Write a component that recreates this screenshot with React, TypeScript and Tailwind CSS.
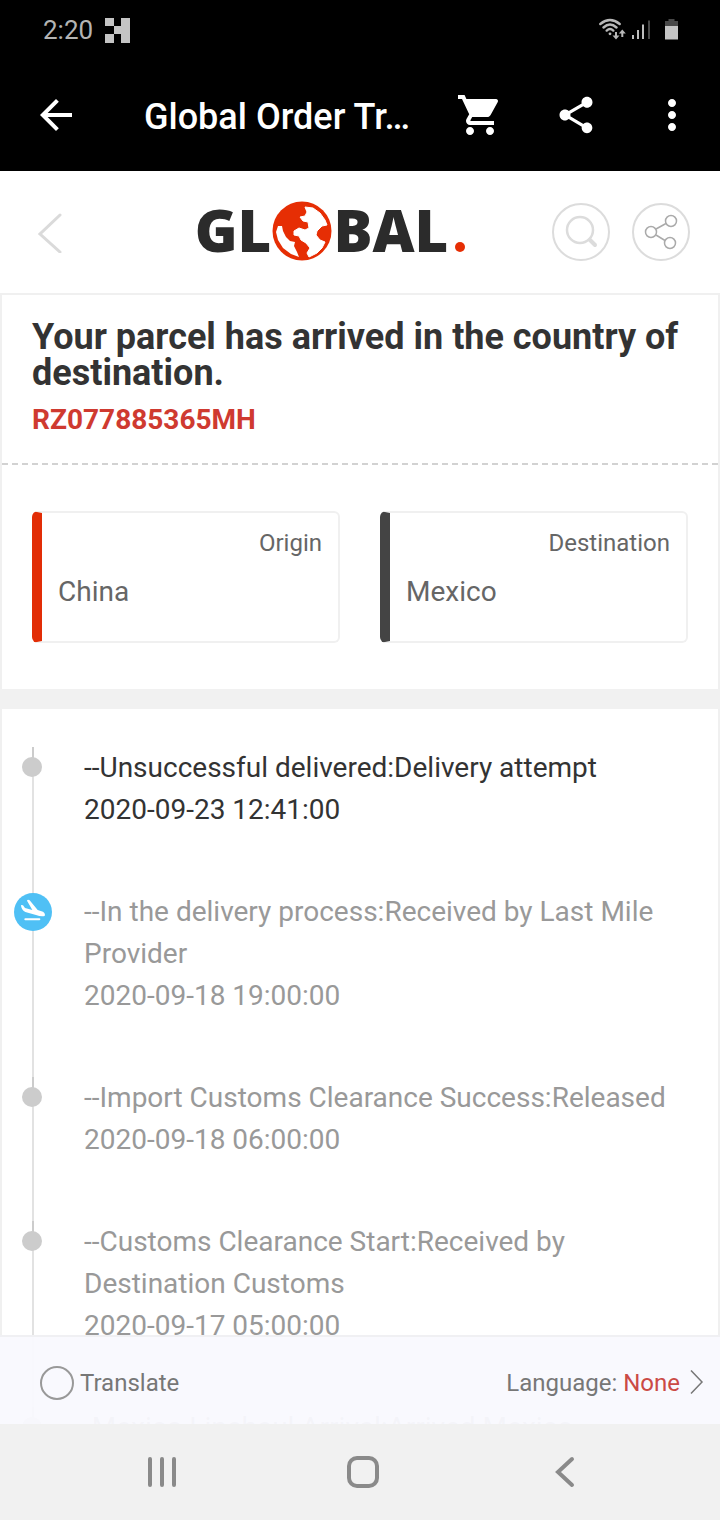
import React from 'react';
import { MdArrowBack, MdMoreVert, MdShare, MdShoppingCart } from 'react-icons/md';

interface TrackingEvent {
  text: string;
  time?: string;
  icon?: 'landing';
  latest?: boolean;
}

interface PlaceCardProps {
  label: string;
  country: string;
  accent: string;
}

const events: TrackingEvent[] = [
  { text: '--Unsuccessful delivered:Delivery attempt', time: '2020-09-23 12:41:00', latest: true },
  { text: '--In the delivery process:Received by Last Mile Provider', time: '2020-09-18 19:00:00', icon: 'landing' },
  { text: '--Import Customs Clearance Success:Released', time: '2020-09-18 06:00:00' },
  { text: '--Customs Clearance Start:Received by Destination Customs', time: '2020-09-17 05:00:00' },
  { text: '-Mexico Linehaul Arrival:Arrived Mexico' },
];

const StatusBar = () => (
  <div className="flex h-15 shrink-0 items-center justify-between pl-[43px] pr-10 text-[#b4b4b4]">
    <div className="flex items-center gap-3">
      <span className="text-[26px] leading-8">2:20</span>
      <svg viewBox="0 0 25 25" className="size-[25px]" fill="#c4c4c4" shapeRendering="crispEdges">
        <path d="M0 0h9v8H0zM9 8h7v8H9zM0 16h9v9H0zM16 0h9v25h-9z" />
      </svg>
    </div>
    <svg viewBox="0 0 82 24" className="h-6 w-[82px]" fill="none">
      {/* wifi with traffic arrows */}
      <g stroke="#b8b8b8" strokeWidth="2.400" strokeLinecap="round">
        <path d="M2.300 6Q12 -1.800 21.700 6M5.500 9.500Q12 3.500 18.500 9.500M8.700 12.600Q12 9.500 15.300 12.600" />
      </g>
      <circle cx="12" cy="15.800" r="1.400" fill="#b8b8b8" />
      <path d="M17 14h2v3.500h2.500L18 21.500l-3.500-4h2.500zM23.300 19h2v-3.500h2.500L24.300 11.500l-3.500 4h2.500z" fill="#b8b8b8" />
      {/* signal */}
      <g strokeWidth="2">
        <path d="M35 17v4M40 12v9M45 6.500V21" stroke="#bdbdbd" />
        <path d="M51 2.500V21" stroke="#484848" />
      </g>
      {/* battery */}
      <path d="M70.500 1h6v2H80v5H67V3h3.500z" fill="#484848" />
      <path d="M67 8h13v13.500h-13z" fill="#c4c4c4" />
    </svg>
  </div>
);

const AppBar = () => (
  <header className="flex h-[110px] shrink-0 items-center pl-8 pr-6 text-white">
    <button aria-label="Back" className="mr-16">
      <MdArrowBack className="size-12" />
    </button>
    <h1 className="min-w-0 flex-1 truncate pt-1 text-[36px] leading-12 font-medium">Global Order Tr…</h1>
    <div className="flex items-center gap-[50px]">
      <button aria-label="Cart">
        <MdShoppingCart className="size-12" />
      </button>
      <button aria-label="Share">
        <MdShare className="size-11" />
      </button>
      <button aria-label="More">
        <MdMoreVert className="size-12" />
      </button>
    </div>
  </header>
);

const Globe = () => (
  <svg viewBox="0 0 60 60" className="size-15">
    <circle cx="30" cy="30" r="29.500" fill="#e62e04" />
    <path
      d="M33 6L41 7L48 12L53 19L55 24L50 25L45 30L44 34L48 39L53 41L50 47L45 52L37 56L35 52L38 47L34 42L29 39L27 35L22 34L22 30L27 27L33 29L37 27L36 21L31 20L28 16L33 15L35 11Z"
      fill="#fff"
      stroke="#fff"
      strokeLinejoin="round"
    />
    <path
      d="M6 25L10 25L11 30L14 36L18 40L23 41L22 45L25 51L27 56L19 53L11 47L6 39L4 31Z"
      fill="#fff"
    />
  </svg>
);

const SiteHeader = () => (
  <div className="flex h-[122px] shrink-0 items-center justify-between bg-white pl-9 pr-[30px]">
    <button aria-label="Previous page">
      <svg viewBox="0 0 28 42" className="h-[42px] w-7" fill="none" stroke="#dadada" strokeWidth="3" strokeLinecap="round">
        <path d="M24 4L4 23L24 41" />
      </svg>
    </button>
    <div className="flex items-center gap-px pb-0.5 pl-11 font-['Open_Sans',sans-serif] text-[58px] leading-15 font-extrabold text-[#2b2b2b]">
      <span className="pb-0.5">GL</span>
      <Globe />
      <span className="pb-0.5">BAL</span>
      <span className="mt-8 ml-1.5 size-2.5 rounded-full bg-[#e62e04]" />
    </div>
    <div className="flex items-center gap-[22px]">
      <button aria-label="Search">
        <svg viewBox="0 0 58 58" className="size-[58px]" fill="none" stroke="#dcdcdc">
          <circle cx="29" cy="29" r="28" strokeWidth="2" />
          <circle cx="28" cy="27" r="13" strokeWidth="2.500" />
          <path d="M38 37L43 42" strokeWidth="4" strokeLinecap="round" />
        </svg>
      </button>
      <button aria-label="Share tracking">
        <svg viewBox="0 0 58 58" className="size-[58px]" fill="none" stroke="#aaa" strokeWidth="1.500">
          <circle cx="29" cy="29" r="28" stroke="#dcdcdc" strokeWidth="2" />
          <circle cx="19" cy="29" r="5.500" />
          <circle cx="39" cy="18" r="5.500" />
          <circle cx="38" cy="40" r="5.500" />
          <path d="M24 26L34 20.500M24 32L33 37.500" />
        </svg>
      </button>
    </div>
  </div>
);

const PlaceCard: React.FC<PlaceCardProps> = ({ label, country, accent }) => (
  <div className={`h-[132px] flex-1 rounded-md border-2 border-l-10 border-[#f0f0f0] px-4 pt-3 text-[#666] ${accent}`}>
    <p className="text-right text-2xl leading-9">{label}</p>
    <p className="pt-2.5 text-[28px] leading-[42px]">{country}</p>
  </div>
);

const LandingIcon = () => (
  <svg viewBox="0 0 114 114" className="size-[38px]" fill="#fff">
    <path d="M21 36L27 37L33 45L55 51L39 23Q41 18 47 22L71 51L87 56Q95 61 92 69Q80 71 66 66L34 57Q21 50 21 36Z" />
    <path d="M34 79H76" stroke="#fff" strokeWidth="6" strokeLinecap="round" />
  </svg>
);

const TimelineItem: React.FC<{ event: TrackingEvent }> = ({ event }) => (
  <li className={`flex text-[28px] leading-[42px] ${event.latest ? 'text-[#333]' : 'text-[#999]'}`}>
    <div className="relative ml-[30px] w-0.5 shrink-0 bg-[#e2e2e2]">
      {event.icon === 'landing' ? (
        <span className="absolute top-0.5 -left-[18px] size-[38px] rounded-full bg-[#4fc0f5]">
          <LandingIcon />
        </span>
      ) : (
        <>
          <span className="absolute top-0 left-0 h-5 w-0.5 bg-[#ccc]" />
          <span className="absolute top-2.5 -left-2.5 size-5 rounded-full bg-[#ccc]" />
        </>
      )}
    </div>
    <div className="ml-[50px] flex-1 pr-12 pb-15">
      <p>{event.text}</p>
      {event.time && <time className="block">{event.time}</time>}
    </div>
  </li>
);

const TranslateBar = () => (
  <div className="absolute inset-x-0 bottom-0 flex h-[89px] items-center justify-between border-t-2 border-[#f0f0f3] bg-[#f9f9fe]/95 pt-1 pr-4 pl-10 text-2xl text-[#777]">
    <label className="flex items-center gap-1.5">
      <input type="checkbox" className="size-[34px] appearance-none rounded-full border-2 border-[#999]" />
      <span>Translate</span>
    </label>
    <button className="flex items-center gap-2.5">
      <span>
        Language: <span className="text-[#cb4a45]">None</span>
      </span>
      <svg viewBox="0 0 14 26" className="h-[26px] w-3.5" fill="none" stroke="#777" strokeWidth="1.500">
        <path d="M1 0.500L12 12L1 23.500" />
      </svg>
    </button>
  </div>
);

const NavigationBar = () => (
  <nav className="flex h-24 shrink-0 items-center justify-center gap-[166px] bg-[#f1f1f1] pl-1.5">
    <button aria-label="Recent apps">
      <svg viewBox="0 0 36 36" className="size-9" stroke="#8a8a8a" strokeWidth="4" strokeLinecap="round">
        <path d="M7 5v26M19 5v26M31 5v26" />
      </svg>
    </button>
    <button aria-label="Home">
      <svg viewBox="0 0 36 36" className="size-9" fill="none" stroke="#8a8a8a" strokeWidth="4">
        <rect x="4" y="4" width="28" height="28" rx="8" />
      </svg>
    </button>
    <button aria-label="Back">
      <svg viewBox="0 0 36 36" className="size-9" fill="none" stroke="#8a8a8a" strokeWidth="4" strokeLinecap="round">
        <path d="M25 5L11 18L25 31" />
      </svg>
    </button>
  </nav>
);

export default function App() {
  return (
    <div className="flex h-screen flex-col bg-black font-[Roboto,sans-serif]">
      <StatusBar />
      <AppBar />
      <div className="relative mt-px flex min-h-0 flex-1 flex-col bg-[#f1f1f1]">
        <SiteHeader />
        <main className="flex min-h-0 flex-1 flex-col gap-5 overflow-hidden">
          <section className="shrink-0 border-x-2 border-t-2 border-[#f0f0f0] bg-white">
            <div className="border-b-2 border-dashed border-[#d2d2d2] px-[30px] pt-6 pb-[22px]">
              <h2 className="text-[36px] leading-9 font-bold text-[#333]">
                Your parcel has arrived in the country of destination.
              </h2>
              <p className="pt-2 text-[28px] leading-[42px] font-bold text-[#cf3a30]">RZ077885365MH</p>
            </div>
            <div className="flex gap-10 px-[30px] py-[46px]">
              <PlaceCard label="Origin" country="China" accent="border-l-[#e22d06]" />
              <PlaceCard label="Destination" country="Mexico" accent="border-l-[#444]" />
            </div>
          </section>
          <section className="shrink-0 border-x-2 border-[#f0f0f0] bg-white pt-[38px]">
            <ul>
              {events.map((event) => (
                <TimelineItem key={event.text} event={event} />
              ))}
            </ul>
          </section>
        </main>
        <TranslateBar />
      </div>
      <NavigationBar />
    </div>
  );
}
